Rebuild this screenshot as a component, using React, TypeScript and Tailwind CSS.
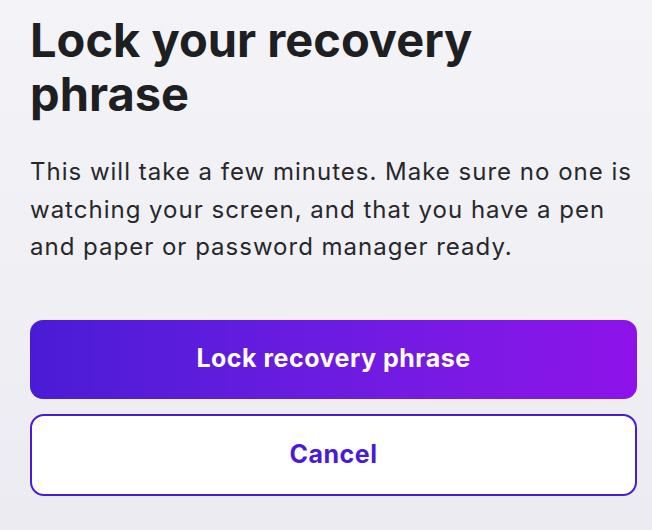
export default function App() {
  return (
    <div
      className="flex h-[530px] w-[652px] flex-col bg-gradient-to-b from-[#f4f4f8] to-[#ebebf1] pl-[30px] pr-[15px] pt-[13px] text-[#202124]"
      style={{ fontFamily: 'Inter, "Noto Sans", sans-serif' }}
    >
      <h1 className="text-[47px] font-bold leading-[54px] text-[#1e1f22]">
        Lock your recovery
        <br />
        phrase
      </h1>
      <p className="mt-[32px] text-[24px] leading-[37.5px] tracking-[1px] text-[#26282c]">
        This will take a few minutes. Make sure no one is watching your screen, and that you have a pen and paper or password manager ready.
      </p>
      <div className="mt-[54px] flex flex-col gap-[15px]">
        <button className="flex h-[79px] w-[607px] items-center justify-center rounded-[13px] bg-gradient-to-r from-[#4a1bd6] to-[#8e12ea] text-[25px] font-bold tracking-[0.5px] text-white">
          Lock recovery phrase
        </button>
        <button className="flex h-[82px] w-[607px] items-center justify-center rounded-[14px] border-2 border-[#4a1bd6] bg-white text-[25px] font-bold tracking-[0.5px] text-[#4a1bd6]">
          Cancel
        </button>
      </div>
    </div>
  )
}
